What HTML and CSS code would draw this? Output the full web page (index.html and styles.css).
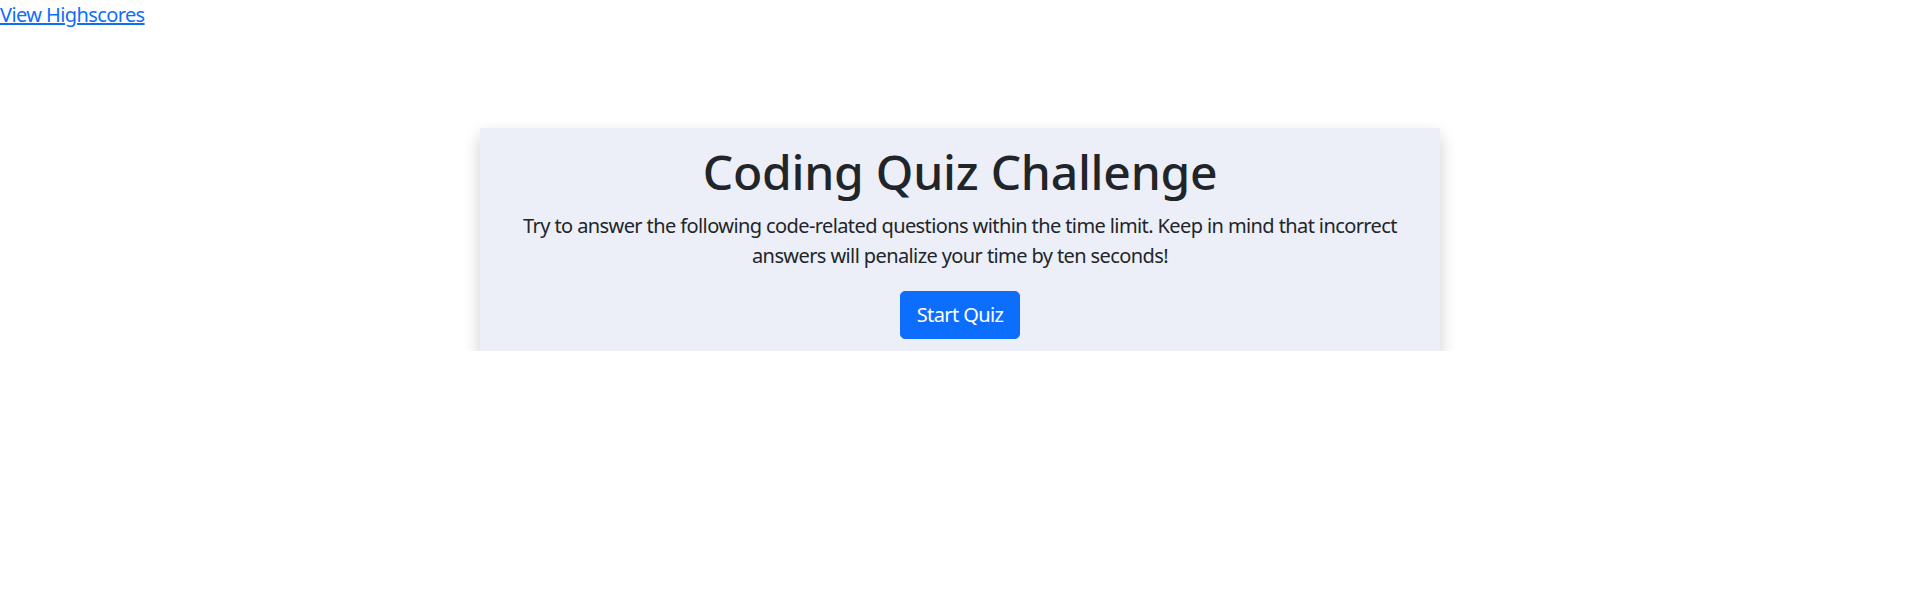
FILE: index.html
```html
<!DOCTYPE html>
<html lang="en">
<head>
<meta charset="utf-8">
<title>Coding Quiz</title>
<link rel="stylesheet" href="styles.css">
</head>
<body>
<header class="topbar">
  <a class="highscores-link" href="#">View Highscores</a>
</header>
<main class="stage">
  <section class="quiz-card">
    <h1 class="quiz-title">Coding Quiz Challenge</h1>
    <p class="quiz-lead">Try to answer the following code-related questions within the time limit. Keep in mind that incorrect answers will penalize your time by ten seconds!</p>
    <button class="start-btn" type="button">Start Quiz</button>
  </section>
</main>
</body>
</html>
```
FILE: styles.css
```css
* { box-sizing: border-box; }
html, body {
  margin: 0;
  padding: 0;
  background: #ffffff;
}
body {
  font-family: "Noto Sans", "Open Sans", sans-serif;
  color: #212529;
  font-size: 20px;
  line-height: 1.5;
  letter-spacing: -0.6px;
}
.topbar {
  height: 30px;
}
.highscores-link {
  color: #0d6efd;
  text-decoration: underline;
  font-size: 20px;
  line-height: 30px;
}
.stage {
  display: flex;
  justify-content: center;
  padding: 98px 0 0 6px;
}
.quiz-card {
  width: 960px;
  background: #eceff8;
  box-shadow: 0 8px 16px rgba(0, 0, 0, 0.2);
  display: flex;
  flex-direction: column;
  align-items: center;
  padding: 13px 16px 12px;
  text-align: center;
}
.quiz-title {
  margin: 0 0 8px;
  font-size: 48px;
  font-weight: 500;
  line-height: 62px;
  letter-spacing: -0.25px;
}
.quiz-lead {
  margin: 0 0 20px;
  font-size: 20px;
  line-height: 30px;
}
.start-btn {
  font-family: inherit;
  font-size: 20px;
  letter-spacing: -0.6px;
  line-height: 30px;
  padding: 8px 16px;
  color: #ffffff;
  background: #0d6efd;
  border: 1px solid #0d6efd;
  border-radius: 5px;
}
```
